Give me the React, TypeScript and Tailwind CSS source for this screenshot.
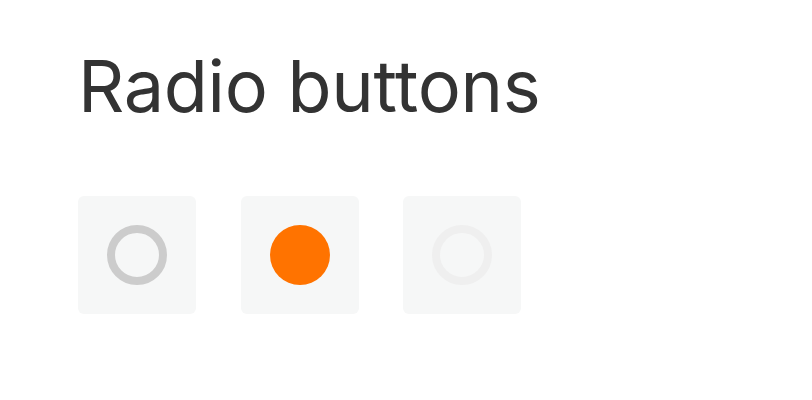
export default function App() {
  return (
    <div className="min-h-[400px] w-[812px] bg-white pl-[78px] pt-[42px]">
      <h1 className="text-[72px] leading-[88px] font-normal tracking-[-0.3px] text-[#333333]" style={{ fontFamily: "Inter, 'Noto Sans', sans-serif" }}>
        Radio buttons
      </h1>
      <div className="mt-[66px] flex gap-[44.5px]">
        <div className="flex h-[118px] w-[118px] items-center justify-center rounded-md bg-[#f6f7f7]">
          <div className="h-[60px] w-[60px] rounded-full border-[8px] border-[#cccccc]" />
        </div>
        <div className="flex h-[118px] w-[118px] items-center justify-center rounded-md bg-[#f6f7f7]">
          <div className="h-[60px] w-[60px] rounded-full bg-[#ff7300]" />
        </div>
        <div className="flex h-[118px] w-[118px] items-center justify-center rounded-md bg-[#f6f7f7]">
          <div className="h-[60px] w-[60px] rounded-full border-[8px] border-[#efefef]" />
        </div>
      </div>
    </div>
  );
}
